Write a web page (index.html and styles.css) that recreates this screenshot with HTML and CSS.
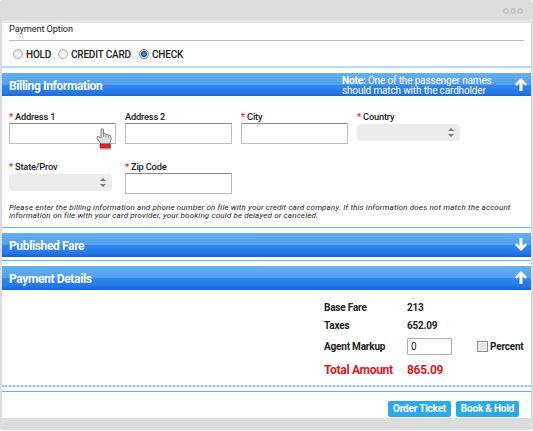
FILE: index.html
```html
<!DOCTYPE html>
<html lang="en">
<head>
<meta charset="utf-8">
<title>Payment</title>
<link rel="stylesheet" href="styles.css">
</head>
<body>
<div class="window">
  <header class="chrome"><i class="dot"></i><i class="dot"></i><i class="dot"></i></header>
  <main class="page">
    <section class="options">
      <h2 class="options-title">Payment Option</h2>
      <div class="radios">
        <label class="choice hold"><i class="radio"></i>HOLD</label>
        <label class="choice credit"><i class="radio"></i>CREDIT CARD</label>
        <label class="choice check"><i class="radio on"></i>CHECK</label>
      </div>
    </section>
    <div class="bar first">
      <h3>Billing Information</h3>
      <p class="bar-note"><b>Note:</b> One of the passenger names<br>should match with the cardholder</p>
      <svg class="arrow" viewBox="0 0 12 13"><path d="M6 0L12 6L10.5 7.7L7.5 5.3V13H4.5V5.3L1.5 7.7L0 6Z"/></svg>
    </div>
    <section class="billing">
      <div class="fields">
        <div class="field"><label><em>*</em> Address 1</label><div class="input">
          <svg class="hand" viewBox="0 0 17 22"><path class="shadow" d="M4 20H15V22H4Z"/><path class="skin" d="M5 10V2Q5 .7 6.2 .7T7.5 2V6Q9 5 10 6.5Q11.4 5.7 12.4 7Q14.6 6.6 15 9V12L13.5 16H5L1 10.5Q.5 8.3 2.5 8.3Z"/><path class="crease" d="M7.5 6V9M10 6.5V9.5M12.5 7V10"/><path class="cuff" d="M4 16H14.5V20H4Z"/></svg>
        </div></div>
        <div class="field"><label>Address 2</label><div class="input"></div></div>
        <div class="field"><label><em>*</em> City</label><div class="input"></div></div>
        <div class="field"><label><em>*</em> Country</label><div class="select"><svg viewBox="0 0 6 9"><path d="M0 3L3 0L6 3ZM0 6H6L3 9Z"/></svg></div></div>
        <div class="field"><label><em>*</em> State/Prov</label><div class="select"><svg viewBox="0 0 6 9"><path d="M0 3L3 0L6 3ZM0 6H6L3 9Z"/></svg></div></div>
        <div class="field"><label><em>*</em> Zip Code</label><div class="input"></div></div>
      </div>
      <p class="hint">Please enter the billing information and phone number on file with your credit card company. If this information does not match the account<br>information on file with your card provider, your booking could be delayed or canceled.</p>
    </section>
    <div class="bar fare">
      <h3>Published Fare</h3>
      <svg class="arrow" viewBox="0 0 12 13"><path d="M6 13L12 7L10.5 5.3L7.5 7.7V0H4.5V7.7L1.5 5.3L0 7Z"/></svg>
    </div>
    <div class="rule"></div>
    <div class="bar details">
      <h3>Payment Details</h3>
      <svg class="arrow" viewBox="0 0 12 13"><path d="M6 0L12 6L10.5 7.7L7.5 5.3V13H4.5V5.3L1.5 7.7L0 6Z"/></svg>
    </div>
    <section class="totals">
      <div class="row"><span>Base Fare</span><span>213</span></div>
      <div class="row"><span>Taxes</span><span>652.09</span></div>
      <div class="row markup"><span>Agent Markup</span><span class="amount">0</span><label class="percent"><i class="box"></i>Percent</label></div>
      <div class="row total"><span>Total Amount</span><span>865.09</span></div>
    </section>
    <footer class="actions">
      <button class="order">Order Ticket</button>
      <button class="book">Book &amp; Hold</button>
    </footer>
  </main>
</div>
</body>
</html>
```
FILE: styles.css
```css
* { box-sizing: border-box; margin: 0; padding: 0; }
body { width: 533px; height: 431px; overflow: hidden; background: #fff; font-family: Roboto, "Liberation Sans", sans-serif; color: #222; }
.window { height: 430px; background: #dcdcdc; border-radius: 3px; padding: 0 2px 12px; }
.chrome { height: 23px; padding: 8px 8px 0 0; display: flex; justify-content: flex-end; gap: 1px; background: linear-gradient(#dcdcdc 20px, #e8e8e8 20px, #e0e0e0); }
.dot { width: 6px; height: 6px; border: 2px solid #c8c8c8; border-radius: 50%; }
.page { height: 395px; background: #fff; display: flex; flex-direction: column; }
.options { height: 45px; border-bottom: 2px solid #b5d9ff; padding: 0 7px; flex: none; }
.options-title { height: 18px; border-bottom: 1px solid #bbb; font-size: 9.2px; font-weight: 400; line-height: 11px; letter-spacing: -.1px; }
.radios { display: flex; padding: 7px 0 0 4px; }
.choice { display: flex; align-items: center; gap: 3px; height: 13px; font-size: 10px; font-weight: 500; line-height: 13px; letter-spacing: -.2px; white-space: nowrap; }
.hold { width: 45px; }
.credit { width: 81px; }
.radio { width: 10px; height: 10px; flex: none; border: 1px solid #aaa; border-radius: 50%; background: radial-gradient(circle at 60% 60%, #fff, #ddd); margin-top: -2px; }
.radio.on { border-color: #778; background: radial-gradient(circle, #38a0ee 0 1px, #123f7b 2.5px, #dce8f2 3.5px); }
.bar { flex: none; height: 24px; padding: 0 4px 0 7px; display: flex; align-items: center; color: #fff; background: linear-gradient(#66b0ee 0, #529eec 12px, #3487ed 12px, #2478e5 20px, #1263d9 24px); }
.bar h3 { flex: 1; font-size: 12px; font-weight: 700; line-height: 14px; letter-spacing: -.36px; padding-top: 2px; }
.first { margin-top: 5px; height: 23px; }
.bar-note { width: 172px; margin-right: 1px; font-size: 10px; line-height: 10px; padding-top: 2px; letter-spacing: -.15px; white-space: nowrap; font-weight: 400; }
.bar-note b { font-weight: 700; }
.arrow { width: 12px; height: 13px; fill: #fff; flex: none; margin-top: -1px; }
.billing { height: 132px; border-bottom: 1px solid #64b5f6; padding: 15px 7px 0; flex: none; }
.fields { display: grid; grid-template-columns: repeat(4, 107px); column-gap: 9px; row-gap: 17px; }
.field { height: 33px; }
.field label { display: block; height: 12px; font-size: 9.3px; line-height: 12px; letter-spacing: -.2px; font-weight: 500; white-space: nowrap; }
.field em { color: #e3131b; font-style: normal; }
.input { height: 21px; border: 1px solid #bbb; border-top-color: #888; position: relative; background: #fff; }
.select { width: 103px; height: 17px; margin-top: 1px; background: #ececec; border-radius: 4px; display: flex; align-items: center; justify-content: flex-end; padding-right: 6px; }
.select svg { width: 6px; height: 9px; fill: #777; }
.hand { position: absolute; left: 86px; top: 4px; width: 17px; height: 22px; }
.skin { fill: #ddd; stroke: #666; stroke-width: .8; }
.crease { stroke: #888; stroke-width: .7; fill: none; }
.cuff { fill: #df2027; stroke: #7d1115; stroke-width: .5; }
.shadow { fill: #ccc; }
.hint { margin-top: 6px; font-size: 8px; line-height: 8px; padding-top: 4px; letter-spacing: .155px; font-style: italic; white-space: nowrap; }
.fare { margin-top: 5px; }
.rule { height: 1px; background: #64b5f6; margin: 3px 0 5px; flex: none; }
.totals { height: 97px; flex: none; border-bottom: 2px dotted #91c4fb; padding: 9px 7px 0 322px; font-size: 10px; font-weight: 700; letter-spacing: -.2px; background: linear-gradient(#cde3fb, #cde3fb) 0 100% / 100% 2px no-repeat border-box; }
.row { display: grid; grid-template-columns: 83px 70px 1fr; height: 17.5px; align-items: center; white-space: nowrap; }
.markup { height: 24px; }
.amount { width: 45px; height: 17px; border: 1px solid #aab; border-radius: 1px; padding-left: 3px; line-height: 15px; font-weight: 400; }
.percent { display: flex; align-items: center; gap: 2px; }
.box { width: 11px; height: 11px; border: 1px solid #888; background: #e4e4e4; box-shadow: inset 0 0 0 1px #fff; }
.total { height: 23px; font-size: 12px; letter-spacing: -.3px; color: #d71920; }
.actions { flex: none; height: 32px; margin-top: 4px; border-top: 1px solid #50b3f5; padding: 9px 12px 0 0; display: flex; justify-content: flex-end; align-items: flex-start; gap: 5px; }
.actions button { width: 63px; height: 16px; border: 0; border-radius: 2px; background: #2baae8; color: #fff; font: 700 10px/16px Roboto, sans-serif; letter-spacing: -.2px; white-space: nowrap; }
```
